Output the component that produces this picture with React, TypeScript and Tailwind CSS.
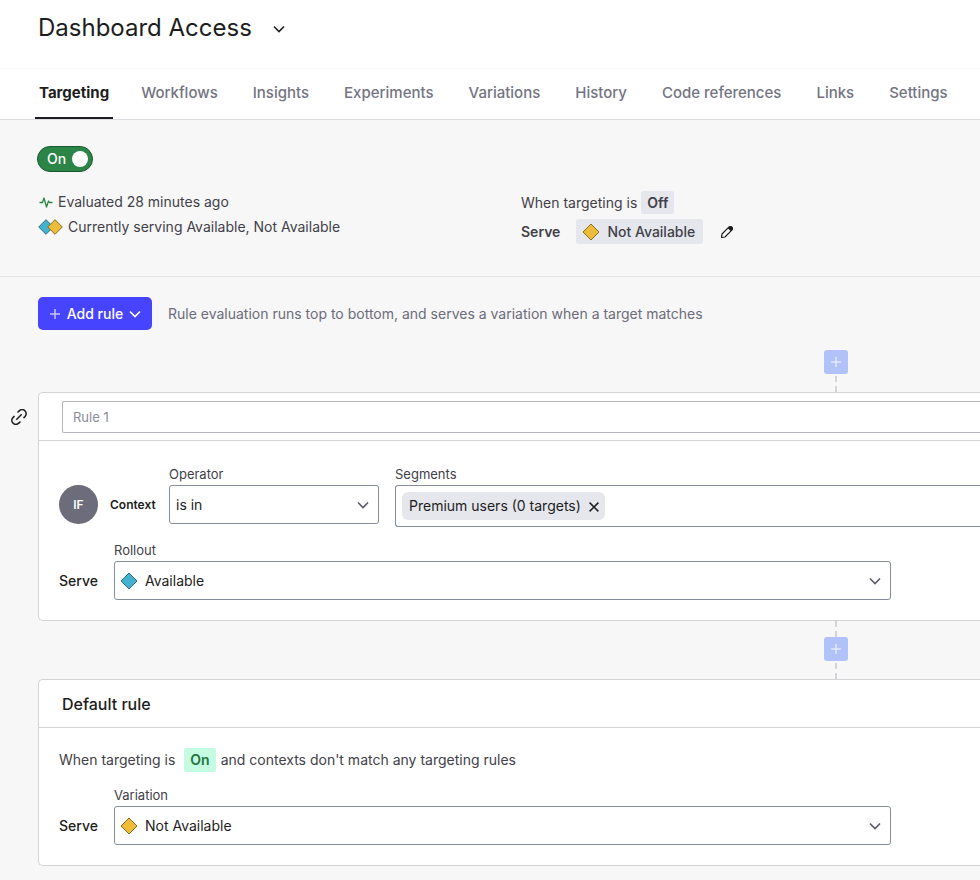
import React, { useState } from "react";

const tabs = [
  "Targeting",
  "Workflows",
  "Insights",
  "Experiments",
  "Variations",
  "History",
  "Code references",
  "Links",
  "Settings",
];

function Diamond({ tone }: { tone: "blue" | "yellow" }) {
  return (
    <svg width="18" height="18" viewBox="0 0 18 18" aria-hidden="true" className="shrink-0">
      <path
        d="M9 1 17 9 9 17 1 9Z"
        fill={tone === "blue" ? "#43b1cf" : "#ecbc3a"}
        stroke={tone === "blue" ? "#2b6f83" : "#8a6a1c"}
        strokeWidth="1"
      />
    </svg>
  );
}

function DiamondPair() {
  return (
    <svg width="25" height="16" viewBox="0 0 25 16" aria-hidden="true" className="shrink-0">
      <path d="M8 .7 15.300 8 8 15.300.7 8Z" fill="#43b1cf" stroke="#2b6f83" />
      <path d="M17 .7 24.300 8 17 15.300 9.700 8Z" fill="#ecbc3a" stroke="#8a6a1c" />
    </svg>
  );
}

function Chevron({ className }: { className?: string }) {
  return (
    <svg width="12" height="8" viewBox="0 0 12 8" fill="none" aria-hidden="true" className={className}>
      <path d="M1 1.500 6 6.500 11 1.500" stroke="currentColor" strokeWidth="1.600" />
    </svg>
  );
}

function Plus({ className }: { className?: string }) {
  return (
    <svg width="12" height="12" viewBox="0 0 12 12" fill="none" aria-hidden="true" className={className}>
      <path d="M6 1v10M1 6h10" stroke="currentColor" strokeWidth="1.500" />
    </svg>
  );
}

function Dashes() {
  return (
    <svg width="2" height="16" viewBox="0 0 2 16" aria-hidden="true">
      <path d="M0 0h2v6H0zM0 10h2v6H0z" fill="#d4d4d8" />
    </svg>
  );
}

function InsertRule({ first = false }: { first?: boolean }) {
  return (
    <div className="ml-auto mr-[132px] flex w-6 flex-col items-center">
      {!first && <Dashes />}
      <button
        type="button"
        aria-label="Insert rule"
        className="flex size-6 items-center justify-center rounded-[3px] bg-[#b1c2fb] text-[#e3e9fe]"
      >
        <Plus />
      </button>
      <div className="pt-0.5">
        <Dashes />
      </div>
    </div>
  );
}

interface SelectProps {
  id: string;
  label: string;
  options: string[];
  tone?: "blue" | "yellow";
}

function SelectField({ id, label, options, tone }: SelectProps) {
  return (
    <div className="flex flex-col">
      <label htmlFor={id} className="mb-px text-[13px] leading-5 text-[#414149]">
        {label}
      </label>
      <div className="relative">
        {tone && (
          <span className="pointer-events-none absolute inset-y-0 left-1.5 flex items-center">
            <Diamond tone={tone} />
          </span>
        )}
        <select
          id={id}
          className={`block h-[39px] w-full appearance-none rounded-[3px] border border-[#868e9c] bg-white pr-8 text-sm text-[#1d1d21] ${
            tone ? "pl-[30px]" : "pl-1.5"
          }`}
        >
          {options.map((option) => (
            <option key={option}>{option}</option>
          ))}
        </select>
        <span className="pointer-events-none absolute inset-y-0 right-2.5 flex items-center text-[#5b5b68]">
          <Chevron />
        </span>
      </div>
    </div>
  );
}

function ServeRow(props: SelectProps) {
  return (
    <div className="mr-[89px] flex items-end gap-4">
      <span className="w-[39px] text-sm leading-[39px] font-medium text-[#1d1d21]">Serve</span>
      <div className="flex-1">
        <SelectField {...props} />
      </div>
    </div>
  );
}

export default function App() {
  const [enabled, setEnabled] = useState(true);

  return (
    <div className="min-h-screen overflow-x-hidden bg-[#f7f7f7] font-['Inter',sans-serif] text-sm text-[#414149]">
      <header className="bg-white">
        <div className="flex h-[69px] items-start gap-[21px] border-b border-[#fafafa] pt-2.5 pl-[38px] text-[#1d1d21]">
          <h1 className="text-2xl leading-9">Dashboard Access</h1>
          <button type="button" aria-label="Flag menu" className="flex h-9 items-center pt-0.5">
            <Chevron />
          </button>
        </div>
        <nav aria-label="Flag sections" className="flex h-[51px] border-b border-[#dcdce0] pl-[35px]">
          {tabs.map((tab, i) => (
            <a
              key={tab}
              href="#"
              aria-current={i === 0 ? "page" : undefined}
              className={
                i === 0
                  ? "mr-6 h-[50px] border-b-2 border-[#1d1d21] px-1 text-[15px] leading-[48px] font-bold whitespace-nowrap text-[#1d1d21]"
                  : "mr-[27px] px-1 text-[15px] leading-[48px] font-medium whitespace-nowrap text-[#747482]"
              }
            >
              {tab}
            </a>
          ))}
        </nav>
      </header>

      <section className="border-b border-[#e4e4e8] pt-[26px] pb-8 pl-[38px]">
        <button
          type="button"
          role="switch"
          aria-checked={enabled}
          onClick={() => setEnabled(!enabled)}
          className="-ml-px flex h-[26px] w-14 items-center justify-between rounded-full border border-[#155a30] bg-[#2a8547] pr-1 pl-[9px] font-medium text-white"
        >
          {enabled ? "On" : "Off"}
          <span className="size-4 rounded-full bg-white" />
        </button>

        <div className="mt-[19px] grid grid-cols-2 gap-x-6">
          <div>
            <p className="flex h-[22px] items-center gap-1.5">
              <svg width="14" height="12" viewBox="0 0 14 12" fill="none" aria-hidden="true" className="ml-px -mr-px">
                <path
                  d="M.5 6.500h3L5 2l2.500 9L9.500 5l1 1.500h3"
                  stroke="#2a8547"
                  strokeWidth="1.300"
                  strokeLinejoin="round"
                />
              </svg>
              Evaluated 28 minutes ago
            </p>
            <p className="mt-1 flex h-5 items-center gap-[5px]">
              <DiamondPair />
              Currently serving Available, Not Available
            </p>
          </div>
          <div>
            <p className="flex h-[23px] items-center gap-1">
              When targeting is
              <strong className="rounded-[2px] bg-[#e6e7ed] px-1.5 leading-[23px] font-semibold">Off</strong>
            </p>
            <p className="mt-[5px] flex h-[25px] items-center">
              <strong className="font-semibold">Serve</strong>
              <span className="ml-4 flex h-[25px] items-center gap-[7px] rounded-[3px] bg-[#e6e7ed] pr-2 pl-1.5 font-medium">
                <Diamond tone="yellow" />
                Not Available
              </span>
              <button type="button" aria-label="Edit off variation" className="ml-[17px] text-[#1d1d21]">
                <svg width="14" height="14" viewBox="0 0 14 14" fill="none" aria-hidden="true" className="block">
                  <path
                    d="M2 9 8.800 2.200a2.100 2.100 0 0 1 3 3L5 12l-3.500.5Z"
                    stroke="currentColor"
                    strokeWidth="1.200"
                    strokeLinejoin="round"
                  />
                  <path d="M7.800 3.200 9.500 1.500q1.500-.8 2.700.3t.3 2.700l-1.700 1.700Z" fill="currentColor" />
                </svg>
              </button>
            </p>
          </div>
        </div>
      </section>

      <main className="pt-5 pb-3.5">
        <div className="mb-5 flex items-center gap-4 pl-[38px]">
          <button
            type="button"
            className="flex h-[33px] w-[114px] items-center justify-center rounded-[5px] bg-[#4744ff] leading-[19px] font-medium text-white"
          >
            <Plus className="mr-1.5 text-[#c5c4ff]" />
            Add rule
            <Chevron className="ml-1.5" />
          </button>
          <p className="leading-[19px] text-[#6c6c7a]">
            Rule evaluation runs top to bottom, and serves a variation when a target matches
          </p>
        </div>

        <InsertRule first />

        <div className="flex items-start">
          <div className="w-[38px] shrink-0 pt-[17px] pl-[11px]">
            <a href="#" aria-label="Copy link to rule" className="block text-[#1d1d21]">
              <svg width="16" height="16" viewBox="0 0 16 16" fill="none" aria-hidden="true">
                <path
                  d="M6.500 3.500 8.200 1.900a3.900 3.900 0 0 1 5.900 0 4 4 0 0 1-.2 5.700L12.500 9M9.500 12.500l-1.700 1.600a3.900 3.900 0 0 1-5.900 0 4 4 0 0 1 .2-5.700L3.500 7M5.300 10.700l5.400-5.400"
                  stroke="currentColor"
                  strokeWidth="1.500"
                />
              </svg>
            </a>
          </div>
          <section className="min-w-0 flex-1 rounded-l-[5px] border border-r-0 border-[#d4d4d8] bg-white">
            <div className="border-b border-[#d4d4d8] pt-2 pb-[7px] pl-[23px]">
              <input
                type="text"
                aria-label="Rule name"
                placeholder="Rule 1"
                className="block h-8 w-full rounded-l-[2px] border border-r-0 border-[#b5b5bd] px-2.5 text-[13px] placeholder:text-[#8c8c99]"
              />
            </div>
            <div className="flex flex-col gap-[13px] pt-[23px] pb-5 pl-5">
              <div className="flex gap-3">
                <span className="mt-[21px] flex size-[39px] shrink-0 items-center justify-center rounded-full bg-[#6c6c7a] text-xs font-semibold text-white">
                  IF
                </span>
                <span className="mt-[21px] w-[47px] text-xs leading-[39px] font-semibold text-[#1d1d21]">
                  Context
                </span>
                <div className="w-[210px] shrink-0">
                  <SelectField id="operator" label="Operator" options={["is in", "is not in"]} />
                </div>
                <div className="ml-1 flex-1">
                  <div className="mb-px text-[13px] leading-5">Segments</div>
                  <div className="flex h-[42px] items-center rounded-l-[3px] border border-r-0 border-[#868e9c] bg-white pl-1.5">
                    <span className="flex h-7 items-center gap-2 rounded-md bg-[#e6e7ed] pr-1.5 pl-[7px] text-[#1d1d21]">
                      Premium users (0 targets)
                      <button type="button" aria-label="Remove Premium users" className="pt-0.5">
                        <svg width="10" height="10" viewBox="0 0 10 10" fill="none" aria-hidden="true" className="block">
                          <path d="m.6.6 8.800 8.800M9.400.6.6 9.400" stroke="currentColor" strokeWidth="1.500" />
                        </svg>
                      </button>
                    </span>
                  </div>
                </div>
              </div>
              <ServeRow id="rollout" label="Rollout" tone="blue" options={["Available", "Not Available"]} />
            </div>
          </section>
        </div>

        <InsertRule />

        <section className="ml-[38px] rounded-l-[5px] border border-r-0 border-[#d4d4d8] bg-white">
          <h2 className="h-12 border-b border-[#d4d4d8] pl-[23px] text-base leading-[48px] font-medium text-[#1d1d21]">
            Default rule
          </h2>
          <div className="flex flex-col gap-[13px] pt-5 pb-5 pl-5">
            <p className="flex h-6 items-center">
              When targeting is
              <strong className="mr-[5px] ml-[9px] rounded-[2px] bg-[#c4fbe2] px-1.5 leading-6 font-semibold text-[#23753b]">
                On
              </strong>
              and contexts don't match any targeting rules
            </p>
            <ServeRow id="variation" label="Variation" tone="yellow" options={["Not Available", "Available"]} />
          </div>
        </section>
      </main>
    </div>
  );
}
